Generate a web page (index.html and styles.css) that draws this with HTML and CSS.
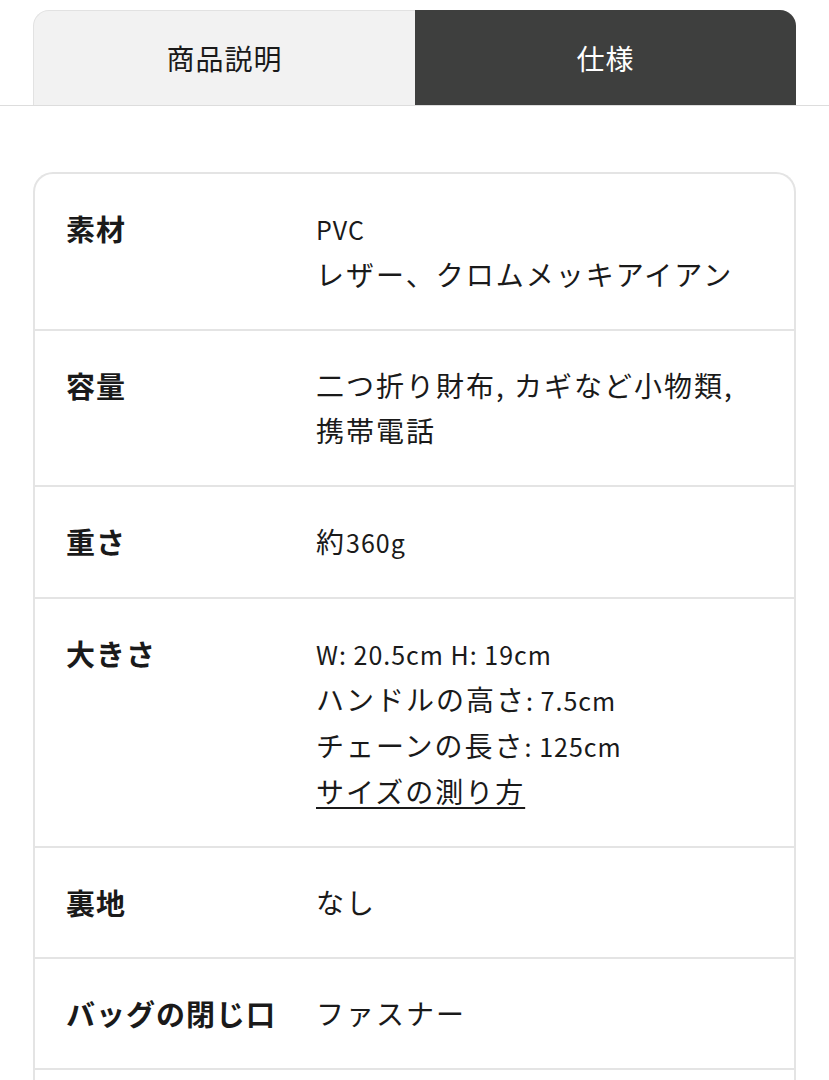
FILE: index.html
```html
<!DOCTYPE html>
<html lang="ja">
<head>
<meta charset="utf-8">
<title>仕様</title>
<link rel="stylesheet" href="styles.css">
</head>
<body>
<div class="tabbar">
  <div class="tabs">
    <div class="tab tab-inactive">商品説明</div>
    <div class="tab tab-active">仕様</div>
  </div>
</div>
<div class="card">
  <div class="row">
    <div class="label">素材</div>
    <div class="value"><span class="latin">PVC</span><br>レザー、クロムメッキアイアン</div>
  </div>
  <div class="row">
    <div class="label">容量</div>
    <div class="value">二つ折り財布, カギなど小物類,<br>携帯電話</div>
  </div>
  <div class="row">
    <div class="label">重さ</div>
    <div class="value">約<span class="latin">360g</span></div>
  </div>
  <div class="row">
    <div class="label">大きさ</div>
    <div class="value"><span class="latin">W: 20.5cm H: 19cm</span><br>ハンドルの高さ<span class="latin">: 7.5cm</span><br>チェーンの長さ<span class="latin">: 125cm</span><br><a class="link" href="#">サイズの測り方</a></div>
  </div>
  <div class="row">
    <div class="label">裏地</div>
    <div class="value">なし</div>
  </div>
  <div class="row">
    <div class="label">バッグの閉じ口</div>
    <div class="value">ファスナー</div>
  </div>
  <div class="row row-more"></div>
</div>
</body>
</html>
```

FILE: styles.css
```css
html, body {
  margin: 0;
  padding: 0;
  background: #ffffff;
}
body {
  font-family: "Noto Sans CJK JP", "Noto Sans", sans-serif;
  color: #1a1a1a;
}
.tabbar {
  padding-top: 10px;
  border-bottom: 1px solid #dddddd;
}
.tabs {
  display: flex;
  margin: 0 33px 0 33px;
}
.tab {
  flex: 1;
  height: 95px;
  display: flex;
  align-items: center;
  justify-content: center;
  font-size: 28px;
  letter-spacing: 1px;
  box-sizing: border-box;
}
.tab-inactive {
  background: #f2f2f2;
  border: 1px solid #e2e2e2;
  border-bottom: none;
  border-right: none;
  border-top-left-radius: 16px;
  color: #1a1a1a;
}
.tab-active {
  background: #3e3f3e;
  color: #ffffff;
  border-top-right-radius: 16px;
}
.card {
  margin: 66px 33px 0 33px;
  border: 2px solid #e4e4e4;
  border-bottom: none;
  border-radius: 20px 20px 0 0;
}
.row {
  display: grid;
  grid-template-columns: 250px 1fr;
  padding: 32px 20px 32px 31px;
  border-top: 2px solid #e4e4e4;
}
.row:first-child {
  border-top: none;
}
.row-more {
  padding: 0;
  height: 40px;
}
.label {
  font-weight: 700;
  font-size: 29px;
  letter-spacing: 1px;
  line-height: 45px;
  white-space: nowrap;
}
.value {
  font-size: 28px;
  letter-spacing: 2px;
  line-height: 45px;
}
.latin {
  font-size: 25px;
  letter-spacing: 1px;
}
.link {
  color: #1a1a1a;
  text-decoration: underline;
  text-underline-offset: 4px;
  text-decoration-thickness: 2px;
}
```
